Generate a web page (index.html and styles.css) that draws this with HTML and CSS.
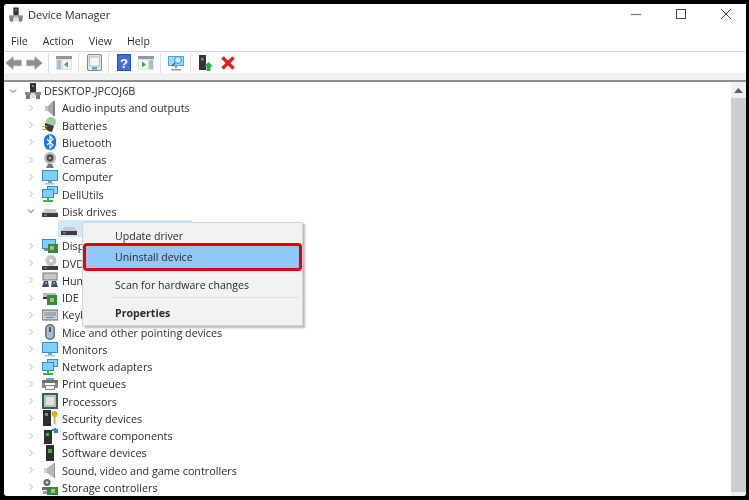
FILE: index.html
```html
<!DOCTYPE html>
<html lang="en">
<head>
<meta charset="utf-8">
<title>Device Manager</title>
<link rel="stylesheet" href="styles.css">
</head>
<body>
<svg class="defs" width="0" height="0" aria-hidden="true">
  <symbol id="i-pc" viewBox="0 0 16 16"><rect x="5" y="0" width="6" height="9" fill="#333"/><rect x="7" y="2" width="2" height="2" fill="#35b04a"/><rect x="0" y="9" width="16" height="3" fill="#8a8a8a"/><rect x="1" y="12" width="4" height="4" fill="#777"/><rect x="11" y="12" width="4" height="4" fill="#777"/><rect x="6" y="10" width="4" height="5" fill="#ddd"/></symbol>
  <symbol id="i-audio" viewBox="0 0 16 16"><path d="M3 6h3v5H3z" fill="#c4c4c4"/><path d="M6 6l5-5v15l-5-5z" fill="#a8a8a8"/><path d="M11 1h2v15h-2z" fill="#808080"/></symbol>
  <symbol id="i-batt" viewBox="0 0 16 16"><circle cx="9" cy="5" r="5" fill="#9ccb9c"/><path d="M3 6l9 3-2 6-4-1-3-3z" fill="#3a3f3a"/><rect x="0" y="9" width="5" height="1" fill="#d9a21b"/><rect x="0" y="12" width="5" height="1" fill="#d9a21b"/></symbol>
  <symbol id="i-bt" viewBox="0 0 16 16"><rect x="2" y="0" width="12" height="16" rx="6" fill="#1577e8"/><path d="M5 5l6 6-3 3V2l3 3-6 6" fill="none" stroke="#fff" stroke-width="1.2"/></symbol>
  <symbol id="i-cam" viewBox="0 0 16 16"><circle cx="8" cy="6" r="6" fill="#b9b9b9"/><circle cx="8" cy="6" r="3.4" fill="#444"/><circle cx="8" cy="6" r="1.5" fill="#8fa6b8"/><path d="M4 16l2-4h4l2 4z" fill="#777"/></symbol>
  <symbol id="i-mon" viewBox="0 0 16 16"><rect x="0" y="1" width="16" height="11" fill="#2c8fd8"/><rect x="1" y="2" width="14" height="9" fill="#7fd0f7"/><rect x="6" y="12" width="4" height="2" fill="#8aa"/><rect x="3" y="14" width="10" height="1.5" fill="#b5c4cc"/></symbol>
  <symbol id="i-net" viewBox="0 0 16 16"><rect x="5" y="0" width="11" height="8" fill="#2c8fd8"/><rect x="6" y="1" width="9" height="6" fill="#8ad4f7"/><rect x="0" y="3" width="12" height="9" fill="#2c8fd8"/><rect x="1" y="4" width="10" height="7" fill="#7fd0f7"/><path d="M5 12h2v2h4v2H1v-2h4z" fill="#3cb54a"/></symbol>
  <symbol id="i-disk" viewBox="0 0 16 16"><path d="M3 6h10l3 4H0z" fill="#c9c9c9"/><rect x="0" y="10" width="16" height="4" fill="#3d3d3d"/><rect x="2" y="11.5" width="3" height="1" fill="#9ad"/></symbol>
  <symbol id="i-disp" viewBox="0 0 16 16"><rect x="0" y="1" width="14" height="10" fill="#2c8fd8"/><rect x="1" y="2" width="12" height="8" fill="#7fd0f7"/><rect x="2" y="11" width="8" height="2" fill="#888"/><rect x="6" y="6" width="10" height="9" fill="#2c8a4e"/><rect x="8" y="8" width="4" height="4" fill="#c8b84a"/></symbol>
  <symbol id="i-dvd" viewBox="0 0 16 16"><circle cx="9" cy="5.5" r="5.5" fill="#c4c4c4"/><circle cx="9" cy="5.5" r="1.6" fill="#fff"/><path d="M0 11h16v4H0z" fill="#3d3d3d"/><rect x="2" y="12.5" width="3" height="1" fill="#4c6"/></symbol>
  <symbol id="i-hum" viewBox="0 0 16 16"><rect x="1" y="1" width="14" height="7" fill="#c7c7c7" stroke="#777"/><path d="M0 15l2-6h4l1 6zM9 15l1-6h4l2 6z" fill="#3f4f63"/><rect x="3" y="10" width="2" height="2" fill="#6ac"/><rect x="11" y="10" width="2" height="2" fill="#6ac"/></symbol>
  <symbol id="i-ide" viewBox="0 0 16 16"><path d="M1 3h13v4H1z" fill="#bbb"/><rect x="1" y="7" width="6" height="2" fill="#333"/><rect x="5" y="5" width="10" height="10" fill="#2c8a4e"/><rect x="8" y="8" width="4" height="4" fill="#c8b84a"/></symbol>
  <symbol id="i-key" viewBox="0 0 16 16"><rect x="0" y="3" width="16" height="10" fill="#c9ced3" stroke="#5c6670"/><path d="M2 6h12M2 8h12M4 10.500h8" stroke="#7b858e"/></symbol>
  <symbol id="i-mouse" viewBox="0 0 16 16"><rect x="3" y="0" width="10" height="16" rx="5" fill="#5f7184"/><rect x="4.500" y="1.500" width="7" height="13" rx="3.500" fill="#aebac6"/><rect x="7" y="3" width="2" height="5" fill="#44566a"/></symbol>
  <symbol id="i-print" viewBox="0 0 16 16"><rect x="4" y="2" width="8" height="3" fill="#5aa7dd"/><rect x="0" y="4" width="16" height="3" fill="#707070"/><rect x="0" y="7" width="3" height="5" fill="#8a8a8a"/><rect x="13" y="7" width="3" height="5" fill="#8a8a8a"/><rect x="3.500" y="9.500" width="9" height="4" fill="#eee" stroke="#888"/></symbol>
  <symbol id="i-cpu" viewBox="0 0 16 16"><rect x="0" y="0" width="16" height="16" fill="#2f6b4a"/><rect x="2" y="2" width="12" height="12" fill="#bdbdbd"/><rect x="4" y="4" width="8" height="8" fill="#e3e3e3"/></symbol>
  <symbol id="i-sec" viewBox="0 0 16 16"><rect x="1" y="0" width="8" height="16" fill="#2e2e2e"/><rect x="3" y="3" width="3" height="3" fill="#39b54a"/><circle cx="12.500" cy="4" r="3" fill="#e0a92a"/><rect x="11.700" y="6" width="1.800" height="8" fill="#e0a92a"/></symbol>
  <symbol id="i-comp" viewBox="0 0 16 16"><rect x="2" y="2" width="8" height="14" fill="#2e2e2e"/><rect x="4" y="5" width="3" height="3" fill="#39b54a"/><path d="M10 5h2V3h-2V1h2V0h2v1h2v4h-6z" fill="#2b86d6"/></symbol>
  <symbol id="i-soft" viewBox="0 0 16 16"><rect x="4" y="0" width="8" height="16" fill="#2e2e2e"/><rect x="6" y="4" width="4" height="4" fill="#39b54a"/></symbol>
  <symbol id="i-sound" viewBox="0 0 16 16"><path d="M2 6h3v5H2z" fill="#d4d4d4"/><path d="M5 6l7-5v15l-7-5z" fill="#b8b8b8"/><path d="M12 1h1v15h-1z" fill="#929292"/></symbol>
  <symbol id="i-stor" viewBox="0 0 16 16"><circle cx="5" cy="3.500" r="3.500" fill="#666"/><circle cx="5" cy="3.500" r="1.300" fill="#ddd"/><path d="M0 8h9v3H0z" fill="#6d6d6d"/><rect x="5" y="8" width="11" height="8" fill="#2c8a4e"/><rect x="9" y="10" width="4" height="4" fill="#c8b84a"/><rect x="1" y="12" width="4" height="3" fill="#999"/></symbol>
  <symbol id="chev-r" viewBox="0 0 6 8"><path d="M1.500 1l3 3-3 3" fill="none" stroke="#b4b4b4" stroke-width="1"/></symbol>
  <symbol id="chev-d" viewBox="0 0 8 6"><path d="M1 1.500l3 3 3-3" fill="none" stroke="#555" stroke-width="1"/></symbol>
</svg>

<div class="window">
  <header class="titlebar">
    <svg class="title-icon"><use href="#i-pc"/></svg>
    <span class="title-text">Device Manager</span>
    <div class="controls">
      <svg class="ctl" viewBox="0 0 10 10"><path d="M0 5.500h10" stroke="#777" stroke-width="1.200"/></svg>
      <svg class="ctl" viewBox="0 0 10 10"><rect x=".5" y=".5" width="9" height="9" fill="none" stroke="#444"/></svg>
      <svg class="ctl" viewBox="0 0 10 10"><path d="M0 0l10 10M10 0L0 10" stroke="#444" stroke-width="1"/></svg>
    </div>
  </header>
  <nav class="menubar">
    <span>File</span><span>Action</span><span>View</span><span>Help</span>
  </nav>
  <div class="toolbar">
    <span class="tb tb-back"><svg width="18" height="16" viewBox="0 0 20 16"><path d="M1 8l8-7v4h9v6H9v4z" fill="#8d8d8d" stroke="#a5a5a5"/></svg></span>
    <span class="tb"><svg width="18" height="16" viewBox="0 0 20 16"><path d="M19 8l-8-7v4H2v6h9v4z" fill="#8d8d8d" stroke="#a5a5a5"/></svg></span>
    <i class="sep"></i>
    <span class="tb"><svg width="16" height="14" viewBox="0 0 16 14"><rect width="16" height="14" fill="#dde3e8"/><rect width="16" height="3" fill="#8f98a0"/><rect x="1" y="4" width="4" height="9" fill="#a9bdcc"/><rect x="7" y="4" width="8" height="9" fill="#f4f4f4"/><path d="M12 5.500v6L8 8.500z" fill="#35b04a"/></svg></span>
    <i class="sep"></i>
    <span class="tb"><svg width="15" height="17" viewBox="0 0 15 17"><rect x=".5" y=".5" width="14" height="16" rx="1.500" fill="#e4e4e4" stroke="#888"/><rect x="2.500" y="3" width="10" height="9" fill="#f5f5f5" stroke="#bbb"/><rect x="5" y="13" width="5" height="2.500" fill="#3fa9e8"/></svg></span>
    <i class="sep"></i>
    <span class="tb"><svg width="14" height="17" viewBox="0 0 14 17"><rect width="14" height="17" fill="#2a4fb5"/><rect x="1" y="1" width="12" height="15" fill="#3f6fd8"/><text class="help-q" x="7" y="13.500" text-anchor="middle">?</text></svg></span>
    <span class="tb"><svg width="16" height="14" viewBox="0 0 16 14"><rect width="16" height="14" fill="#dde3e8"/><rect width="16" height="3" fill="#8f98a0"/><rect x="11" y="4" width="4" height="9" fill="#a9bdcc"/><rect x="1" y="4" width="9" height="9" fill="#f4f4f4"/><path d="M4 5.500v6l4-3z" fill="#35b04a"/></svg></span>
    <i class="sep"></i>
    <span class="tb"><svg width="17" height="16" viewBox="0 0 17 16"><rect y="1" width="16" height="10" fill="#4ba6e3"/><rect x="1" y="2" width="14" height="8" fill="#9adcf9"/><circle cx="10" cy="5" r="3.500" fill="#c2ecfb" stroke="#3a8fca"/><path d="M7 8l-3 3" stroke="#555" stroke-width="1.500"/><path d="M7 11h2v2H7zM3 14h10v1.500H3z" fill="#8a9aa6"/></svg></span>
    <i class="sep"></i>
    <span class="tb"><svg width="14" height="16" viewBox="0 0 14 16"><rect width="7" height="15" fill="#333"/><rect x="2" y="3" width="2.500" height="2.500" fill="#39b54a"/><path d="M9.500 7l4.500 4.500h-2.500V16h-4v-4.500H5z" fill="#27a844"/></svg></span>
    <span class="tb"><svg width="14" height="14" viewBox="0 0 14 14"><path d="M1.500 1.500l11 11M12.500 1.500l-11 11" stroke="#df1f26" stroke-width="3.400"/></svg></span>
  </div>
  <div class="toolbar-foot"></div>

  <div class="content">
    <ul class="tree">
      <li class="row root"><svg class="chev-d"><use href="#chev-d"/></svg><svg class="ico"><use href="#i-pc"/></svg><span>DESKTOP-JPCOJ6B</span></li>
      <li class="row"><svg class="chev"><use href="#chev-r"/></svg><svg class="ico"><use href="#i-audio"/></svg><span>Audio inputs and outputs</span></li>
      <li class="row"><svg class="chev"><use href="#chev-r"/></svg><svg class="ico"><use href="#i-batt"/></svg><span>Batteries</span></li>
      <li class="row"><svg class="chev"><use href="#chev-r"/></svg><svg class="ico"><use href="#i-bt"/></svg><span>Bluetooth</span></li>
      <li class="row"><svg class="chev"><use href="#chev-r"/></svg><svg class="ico"><use href="#i-cam"/></svg><span>Cameras</span></li>
      <li class="row"><svg class="chev"><use href="#chev-r"/></svg><svg class="ico"><use href="#i-mon"/></svg><span>Computer</span></li>
      <li class="row"><svg class="chev"><use href="#chev-r"/></svg><svg class="ico"><use href="#i-net"/></svg><span>DellUtils</span></li>
      <li class="row"><svg class="chev-d child"><use href="#chev-d"/></svg><svg class="ico"><use href="#i-disk"/></svg><span>Disk drives</span></li>
      <li class="row leaf"><span class="selected"><svg class="ico"><use href="#i-disk"/></svg></span></li>
      <li class="row"><svg class="chev"><use href="#chev-r"/></svg><svg class="ico"><use href="#i-disp"/></svg><span>Display adapters</span></li>
      <li class="row"><svg class="chev"><use href="#chev-r"/></svg><svg class="ico"><use href="#i-dvd"/></svg><span>DVD/CD-ROM drives</span></li>
      <li class="row"><svg class="chev"><use href="#chev-r"/></svg><svg class="ico"><use href="#i-hum"/></svg><span>Human Interface Devices</span></li>
      <li class="row"><svg class="chev"><use href="#chev-r"/></svg><svg class="ico"><use href="#i-ide"/></svg><span>IDE ATA/ATAPI controllers</span></li>
      <li class="row"><svg class="chev"><use href="#chev-r"/></svg><svg class="ico"><use href="#i-key"/></svg><span>Keyboards</span></li>
      <li class="row"><svg class="chev"><use href="#chev-r"/></svg><svg class="ico"><use href="#i-mouse"/></svg><span>Mice and other pointing devices</span></li>
      <li class="row"><svg class="chev"><use href="#chev-r"/></svg><svg class="ico"><use href="#i-mon"/></svg><span>Monitors</span></li>
      <li class="row"><svg class="chev"><use href="#chev-r"/></svg><svg class="ico"><use href="#i-net"/></svg><span>Network adapters</span></li>
      <li class="row"><svg class="chev"><use href="#chev-r"/></svg><svg class="ico"><use href="#i-print"/></svg><span>Print queues</span></li>
      <li class="row"><svg class="chev"><use href="#chev-r"/></svg><svg class="ico"><use href="#i-cpu"/></svg><span>Processors</span></li>
      <li class="row"><svg class="chev"><use href="#chev-r"/></svg><svg class="ico"><use href="#i-sec"/></svg><span>Security devices</span></li>
      <li class="row"><svg class="chev"><use href="#chev-r"/></svg><svg class="ico"><use href="#i-comp"/></svg><span>Software components</span></li>
      <li class="row"><svg class="chev"><use href="#chev-r"/></svg><svg class="ico"><use href="#i-soft"/></svg><span>Software devices</span></li>
      <li class="row"><svg class="chev"><use href="#chev-r"/></svg><svg class="ico"><use href="#i-sound"/></svg><span>Sound, video and game controllers</span></li>
      <li class="row"><svg class="chev"><use href="#chev-r"/></svg><svg class="ico"><use href="#i-stor"/></svg><span>Storage controllers</span></li>
    </ul>
    <div class="scrollbar">
      <div class="sb-up"><svg width="9" height="6" viewBox="0 0 9 6"><path d="M0 6l4.500-5L9 6z" fill="#606060"/></svg></div>
      <div class="sb-thumb"></div>
    </div>
  </div>

  <div class="menu">
    <div class="menu-item first">Update driver</div>
    <div class="menu-item hot">Uninstall device</div>
    <div class="menu-item scan">Scan for hardware changes</div>
    <div class="menu-sep"></div>
    <div class="menu-item strong">Properties</div>
  </div>
</div>
</body>
</html>
```
FILE: styles.css
```css
* { box-sizing: border-box; }
html, body { margin: 0; height: 100%; }
body {
  background: #000;
  overflow: hidden;
  font-family: "Open Sans", "Noto Sans", sans-serif;
  color: #2b2b2b;
}
.defs { position: absolute; }
.window {
  position: relative;
  margin: 4px 3px 0 4px;
  height: 492px;
  background: #fff;
  border-radius: 3px 0 3px 3px;
  overflow: hidden;
  display: flex;
  flex-direction: column;
  filter: blur(0.35px);
}
.titlebar {
  height: 22px;
  flex: none;
  display: flex;
  align-items: center;
  padding: 0 0 2px 5px;
}
.title-icon { width: 14px; height: 15px; flex: none; }
.title-text { margin-left: 5px; font-size: 11px; }
.controls {
  margin-left: auto;
  display: flex;
  gap: 35px;
  padding-right: 15px;
}
.ctl { width: 10px; height: 10px; display: block; }
.menubar {
  height: 26px;
  flex: none;
  display: flex;
  align-items: center;
  gap: 15px;
  padding: 4px 0 0 7px;
  font-size: 10.600px;
  border-bottom: 1px solid #d9d9d9;
}
.toolbar {
  height: 21px;
  flex: none;
  display: flex;
  align-items: center;
}
.tb { width: 22px; height: 21px; display: flex; align-items: center; justify-content: center; flex: none; }
.tb-back { width: 19px; }
.sep { width: 1px; height: 20px; margin: 0 4px 0 3px; background: #dcdcdc; flex: none; }
.help-q { font: bold 13px "Liberation Sans", sans-serif; fill: #fff; }
.toolbar-foot {
  height: 7px;
  flex: none;
  background: #f1f1f1;
  border-bottom: 2px solid #8e8e8e;
  box-sizing: content-box;
}
.content {
  flex: 1;
  min-height: 0;
  display: flex;
}
.tree {
  list-style: none;
  margin: 0;
  padding: 0;
  flex: 1;
  min-width: 0;
  overflow: hidden;
}
.row {
  height: 17.260px;
  display: flex;
  align-items: center;
  padding-left: 24px;
  font-size: 10.800px;
  white-space: nowrap;
}
.root { padding-left: 5px; }
.chev { width: 6px; height: 8px; flex: none; margin-right: 8px; }
.chev-d { width: 8px; height: 6px; flex: none; margin-right: 8px; }
.chev-d.child { margin-left: -1px; margin-right: 7px; }
.ico { width: 16px; height: 16px; flex: none; margin-right: 4px; }
.root .ico { margin-right: 3px; }
.leaf { padding-left: 54px; }
.selected { width: 134px; height: 17px; background: #cce8ff; display: flex; align-items: center; padding-left: 3px; }
.scrollbar {
  width: 15px;
  flex: none;
  background: #f0f0f0;
  display: flex;
  flex-direction: column;
}
.sb-up { height: 16px; display: flex; align-items: center; justify-content: center; flex: none; }
.sb-thumb { flex: 1; background: #cdcdcd; margin-bottom: 4px; }
.menu {
  position: absolute;
  left: 78px;
  top: 218px;
  width: 221px;
  height: 104px;
  background: #f2f2f2;
  border: 1px solid #d4d4d4;
  box-shadow: 2px 2px 2px rgba(0,0,0,.28);
  padding-top: 2px;
  font-size: 10.600px;
}
.menu-item {
  height: 22px;
  line-height: 22px;
  padding-left: 31px;
  margin: 0 1px;
}
.menu-item.first { height: 19px; }
.menu-item.hot {
  height: 26px;
  line-height: 26px;
  background: #90c8f6;
  outline: 3px solid #e2000f;
  outline-offset: -2px;
  border-radius: 3px;
}
.menu-item.scan { margin-top: 4px; }
.menu-sep { height: 1px; margin: 1px 3px 4px 29px; background: #dedede; }
.strong { font-weight: 700; }
```
